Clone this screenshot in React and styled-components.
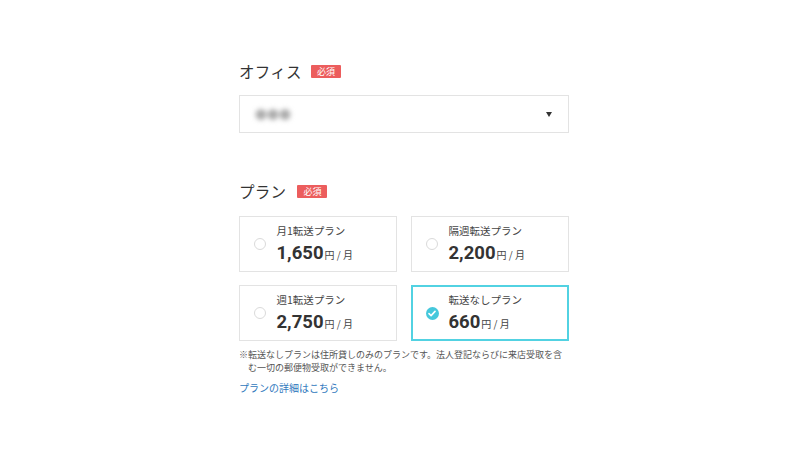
import React, { useState } from "react";
import styled, { createGlobalStyle } from "styled-components";

const Global = createGlobalStyle`
  html, body { margin: 0; padding: 0; background: #fff; }
  body { font-family: "Noto Sans CJK JP", "Noto Sans", sans-serif; color: #333; }
`;

const Page = styled.div`
  width: 812px;
  height: 457px;
  box-sizing: border-box;
  padding: 60px 0 0 239px;
`;

const Form = styled.div`
  width: 330px;
  display: flex;
  flex-direction: column;
`;

const LabelRow = styled.div`
  display: flex;
  align-items: center;
  height: 22px;
  gap: ${(p) => p.$gap}px;
  margin-top: ${(p) => p.$mt || 0}px;
`;

const Label = styled.span`
  font-size: 15.5px;
  color: #333;
  letter-spacing: 0.3px;
  line-height: 22px;
`;

const Badge = styled.span`
  background: #ec5d5d;
  color: #fff;
  font-size: 9px;
  line-height: 13px;
  height: 13px;
  padding: 0 6px;
  border-radius: 1px;
`;

const Select = styled.div`
  margin-top: 13px;
  height: 38px;
  box-sizing: border-box;
  border: 1.5px solid #e3e3e3;
  display: flex;
  align-items: center;
  justify-content: space-between;
  padding: 0 16px 0 15px;
`;

const Blurred = styled.span`
  font-size: 12px;
  color: #aaa;
  filter: blur(2.5px);
`;

const Caret = styled.span`
  width: 0;
  height: 0;
  border-left: 3.5px solid transparent;
  border-right: 3.5px solid transparent;
  border-top: 5px solid #333;
`;

const Grid = styled.div`
  margin-top: 14px;
  display: grid;
  grid-template-columns: 158px 158px;
  column-gap: 14px;
  row-gap: 13px;
`;

const Card = styled.div`
  height: 56px;
  box-sizing: border-box;
  border: ${(p) => (p.$selected ? "2px solid #52d2e2" : "1.5px solid #e3e3e3")};
  display: flex;
  align-items: center;
  padding-left: ${(p) => (p.$selected ? 12.5 : 13.5)}px;
  gap: 11px;
  cursor: pointer;
`;

const Radio = styled.span`
  width: 12px;
  height: 12px;
  box-sizing: border-box;
  border-radius: 50%;
  border: 1px solid #dadada;
  flex: none;
`;

const CheckCircle = styled.span`
  width: 13px;
  height: 13px;
  border-radius: 50%;
  background: #45c8dc;
  flex: none;
  display: flex;
  align-items: center;
  justify-content: center;
  margin-right: -1px;
`;

const CardBody = styled.div`
  display: flex;
  flex-direction: column;
  margin-top: -1px;
`;

const PlanName = styled.span`
  font-size: 10.5px;
  line-height: 14px;
  color: #444;
`;

const PriceLine = styled.div`
  display: flex;
  align-items: baseline;
  height: 22px;
  margin-top: 4px;
`;

const Amount = styled.span`
  font-family: "Roboto", "Noto Sans", sans-serif;
  font-weight: 700;
  font-size: 18.5px;
  color: #333;
  line-height: 22px;
`;

const Unit = styled.span`
  font-size: 10px;
  color: #444;
  margin-left: 1px;
`;

const Note = styled.p`
  margin: 7px 0 0;
  font-size: 9px;
  line-height: 13px;
  color: #555;
  padding-left: 9px;
  text-indent: -9px;
`;

const Link = styled.a`
  margin-top: 7px;
  font-size: 10px;
  line-height: 13px;
  color: #2f78bd;
  text-decoration: none;
`;

const plans = [
  { name: "月1転送プラン", price: "1,650" },
  { name: "隔週転送プラン", price: "2,200" },
  { name: "週1転送プラン", price: "2,750" },
  { name: "転送なしプラン", price: "660" },
];

export default function App() {
  const [selected, setSelected] = useState(3);
  return (
    <Page>
      <Global />
      <Form>
        <LabelRow $gap={9}>
          <Label>オフィス</Label>
          <Badge>必須</Badge>
        </LabelRow>
        <Select>
          <Blurred>●●●</Blurred>
          <Caret />
        </Select>

        <LabelRow $gap={11} $mt={47}>
          <Label>プラン</Label>
          <Badge>必須</Badge>
        </LabelRow>
        <Grid>
          {plans.map((p, i) => (
            <Card key={p.name} $selected={selected === i} onClick={() => setSelected(i)}>
              {selected === i ? (
                <CheckCircle>
                  <svg width="8" height="7" viewBox="0 0 8 7">
                    <path d="M1 3.6 L3.1 5.6 L7 1.4" fill="none" stroke="#fff" strokeWidth="1.6" strokeLinecap="round" strokeLinejoin="round" />
                  </svg>
                </CheckCircle>
              ) : (
                <Radio />
              )}
              <CardBody>
                <PlanName>{p.name}</PlanName>
                <PriceLine>
                  <Amount>{p.price}</Amount>
                  <Unit>円 / 月</Unit>
                </PriceLine>
              </CardBody>
            </Card>
          ))}
        </Grid>
        <Note>
          ※転送なしプランは住所貸しのみのプランです。法人登記ならびに来店受取を含む一切の郵便物受取ができません。
        </Note>
        <Link href="#">プランの詳細はこちら</Link>
      </Form>
    </Page>
  );
}
